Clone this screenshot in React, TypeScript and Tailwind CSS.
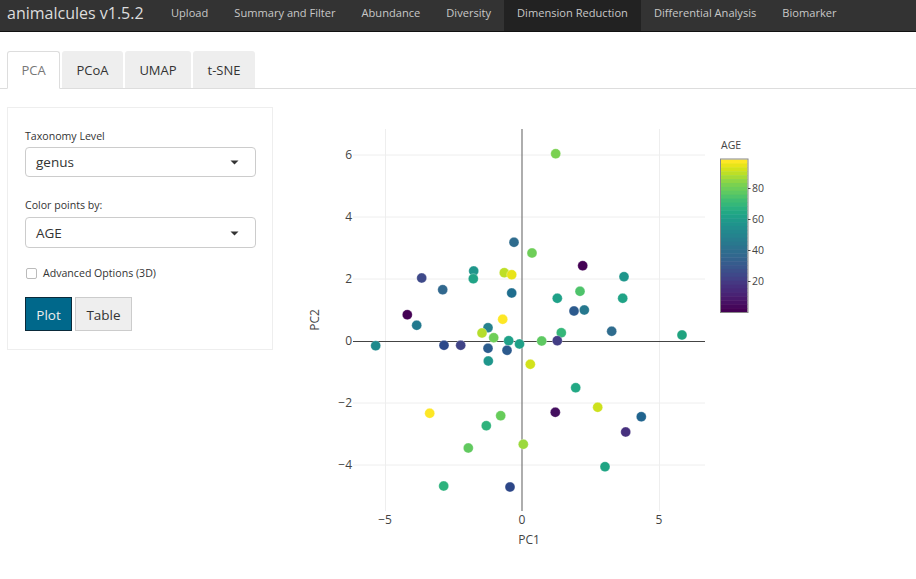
import { useState } from "react";

const navItems = ["Upload", "Summary and Filter", "Abundance", "Diversity", "Dimension Reduction", "Differential Analysis", "Biomarker"];
const tabs = ["PCA", "PCoA", "UMAP", "t-SNE"];

// page pixel coordinates, the svg viewBox below starts at 300,107
const points: [number, number, string][] = [
  [514, 242.3, "#2f6c8e"], [421.7, 278, "#3e4989"], [442.7, 289.7, "#31688e"], [473.7, 271, "#1f968b"],
  [473.3, 278.7, "#20a386"], [504.3, 272.7, "#bddf26"], [511.7, 274.7, "#e8e419"], [511.7, 293, "#1f6e8e"],
  [407.3, 314.7, "#440154"], [416.7, 325.3, "#22798e"], [502.7, 319.3, "#fde725"], [488, 327.7, "#26828e"],
  [482, 333, "#b5de2b"], [493.7, 337.7, "#6ece58"], [508.7, 340.7, "#1fa188"], [555.7, 153.7, "#7ad151"],
  [532, 253, "#6ece58"], [582.7, 265.7, "#440154"], [624, 276.7, "#1f968b"], [580, 291.3, "#4ec36b"],
  [557.3, 298.3, "#1fa188"], [622.7, 298.3, "#20a386"], [574, 311, "#2c5a8d"], [584.3, 310, "#26788e"],
  [611.7, 331.3, "#2f6c8e"], [561.3, 332.7, "#35b779"], [682, 335, "#1fa37f"], [541.7, 341, "#5ec962"],
  [557.3, 340.7, "#433e85"], [375.7, 345.7, "#1f8a8c"], [444, 345.3, "#2d4a8a"], [460.7, 345.3, "#414487"],
  [488, 348.3, "#2c5c8d"], [507, 350.3, "#2c5a8d"], [488.3, 361, "#1f968b"], [429.7, 413.3, "#fde725"],
  [500.7, 415.7, "#66cc5a"], [486.3, 425.7, "#2eb27c"], [468.3, 448, "#61c95f"], [443.7, 486, "#2db27d"],
  [510, 487, "#2c4687"], [519.5, 344, "#1fa188"], [530.3, 364.3, "#d2e21b"], [575.7, 387.7, "#22a884"],
  [597.7, 407.3, "#cde11d"], [555.3, 412.3, "#440f5f"], [641.3, 416.7, "#20648e"], [625.7, 432, "#46307e"],
  [523.3, 444.3, "#9bd93c"], [605, 466.7, "#1ea483"],
];

const viridis = [
  "#fde725", "#e8e419", "#d2e21b", "#bddf26", "#a5db36", "#8ed645", "#7ad151", "#6ccd5a", "#5ec962", "#4ec36b",
  "#3fbc73", "#35b779", "#2ab07f", "#22a884", "#1fa188", "#1f9a8a", "#1f948c", "#218e8d", "#23888e", "#25838e",
  "#277d8e", "#29788e", "#2c728e", "#2e6d8e", "#31688e", "#33628d", "#365c8d", "#39568c", "#3c4f8a", "#3f4889",
  "#424186", "#453882", "#46307e", "#472a7a", "#482374", "#481a6c", "#471164", "#45085b", "#440154",
];

const yTicks: [string, number][] = [["6", 155], ["4", 217], ["2", 279], ["0", 341], ["−2", 403], ["−4", 465]];
const xTicks: [string, number][] = [["−5", 385], ["0", 522], ["5", 659]];
const barTicks: [string, number][] = [["80", 188.5], ["60", 219.5], ["40", 250.5], ["20", 281.5]];

function Caret() {
  return (
    <svg width="9" height="5" viewBox="0 0 9 5" className="shrink-0">
      <path d="M0.5 0.5H8.5L4.5 4.5Z" fill="#333" />
    </svg>
  );
}

function SelectBox({ label, value, tall }: { label: string; value: string; tall?: boolean }) {
  return (
    <div className="mb-[19px] flex flex-col">
      <label className="mb-[2px] pt-px text-[10.6px] leading-[17px] text-[#333]">{label}</label>
      <div className={`flex items-center justify-between rounded-[4px] border border-[#ccc] bg-white pr-[16px] pl-[10px] text-[13.5px] text-[#333] ${tall ? "mt-[1px] h-[31px] pt-px" : "h-[30px]"}`}>
        <span>{value}</span>
        <Caret />
      </div>
    </div>
  );
}

function Chart() {
  return (
    <svg width="480" height="450" viewBox="300 107 480 450" className="ml-[27px] shrink-0" fontFamily="'Open Sans', sans-serif" fontSize="12" fill="#444">
      {[155, 217, 279, 403, 465].map((y) => (
        <line key={y} x1="353" x2="705" y1={y} y2={y} stroke="#eee" />
      ))}
      {[385.5, 659.5].map((x) => (
        <line key={x} x1={x} x2={x} y1="129" y2="511" stroke="#eee" />
      ))}
      <line x1="522" x2="522" y1="129" y2="511" stroke="#777" strokeWidth="1.2" />
      <line x1="353" x2="705" y1="341.5" y2="341.5" stroke="#444" />

      {yTicks.map(([t, y]) => (
        <text key={t} x="352" y={y + 4.4} textAnchor="end">{t}</text>
      ))}
      {xTicks.map(([t, x]) => (
        <text key={t} x={x} y="523.5" textAnchor="middle">{t}</text>
      ))}
      <text x="529" y="543.5" textAnchor="middle">PC1</text>
      <text transform="translate(319 320) rotate(-90)" textAnchor="middle">PC2</text>

      {points.map(([x, y, c], i) => (
        <circle key={i} cx={x} cy={y} r="5" fill={c} stroke="#fff" strokeOpacity="0.5" strokeWidth="0.6" />
      ))}

      <text x="721" y="149" fontSize="10.5">AGE</text>
      {viridis.map((c, i) => (
        <rect key={c} x="721" y={159.5 + i * (152.5 / viridis.length)} width="26.5" height={152.5 / viridis.length + 0.5} fill={c} />
      ))}
      <rect x="720.5" y="159" width="27.5" height="153.5" fill="none" stroke="#888" />
      {barTicks.map(([t, y]) => (
        <g key={t}>
          <line x1="748" x2="750.5" y1={y} y2={y} stroke="#444" />
          <text x="752" y={y + 3.8} fontSize="10.5">{t}</text>
        </g>
      ))}
    </svg>
  );
}

export default function App() {
  const [active] = useState("Dimension Reduction");

  return (
    <div className="h-[579px] overflow-hidden bg-white font-['Open_Sans',sans-serif]">
      <nav className="flex h-[32px] items-stretch border-b border-[#111] bg-[#333]">
        <div className="flex w-[158px] items-center pb-[6px] pl-[7px] text-[16px] whitespace-nowrap text-[#ddd]">animalcules v1.5.2</div>
        {navItems.map((item) => (
          <div
            key={item}
            className={`flex items-center px-[13px] pb-[5px] text-[11.1px] whitespace-nowrap text-[#c8c8c8] ${item === active ? "bg-[#222]" : ""}`}
          >
            {item}
          </div>
        ))}
      </nav>

      <div className="mt-[19px] flex h-[38px] gap-[2px] border-b border-[#ddd] px-[7px]">
        {tabs.map((t, i) => (
          <div
            key={t}
            className={
              i === 0
                ? "-mb-px flex h-[38px] w-[53px] items-center justify-center rounded-t-[3px] border border-[#ddd] border-b-white bg-white pt-[2px] text-[13px] text-[#777]"
                : `flex h-[37px] items-center justify-center rounded-t-[3px] bg-[#eee] pt-[2px] text-[13px] text-[#333] ${t === "PCoA" ? "w-[61px]" : t === "UMAP" ? "w-[66px]" : "w-[62px]"}`
            }
          >
            {t}
          </div>
        ))}
      </div>

      <main className="mt-[18px] flex items-start pl-[7px]">
        <aside className="h-[243px] w-[266px] shrink-0 border border-[#eee] bg-white pt-[19px] pr-[16px] pl-[17px]">
          <SelectBox label="Taxonomy Level" value="genus" />
          <SelectBox label="Color points by:" value="AGE" tall />
          <div className="mt-[-2px] flex items-center gap-[6px] text-[10.6px] leading-[17px] text-[#333]">
            <span className="ml-px h-[11px] w-[11px] rounded-[2px] border border-[#bbb] bg-white" />
            Advanced Options (3D)
          </div>
          <div className="mt-[15px] flex gap-[3px]">
            <button className="h-[34px] w-[47px] border border-[#0a2a3a] bg-[#00688b] pt-[2px] text-[13.5px] text-[#eee]">Plot</button>
            <button className="h-[34px] w-[57px] border border-[#ccc] bg-[#eee] pt-[2px] text-[13.5px] text-[#333]">Table</button>
          </div>
        </aside>
        <Chart />
      </main>
    </div>
  );
}
